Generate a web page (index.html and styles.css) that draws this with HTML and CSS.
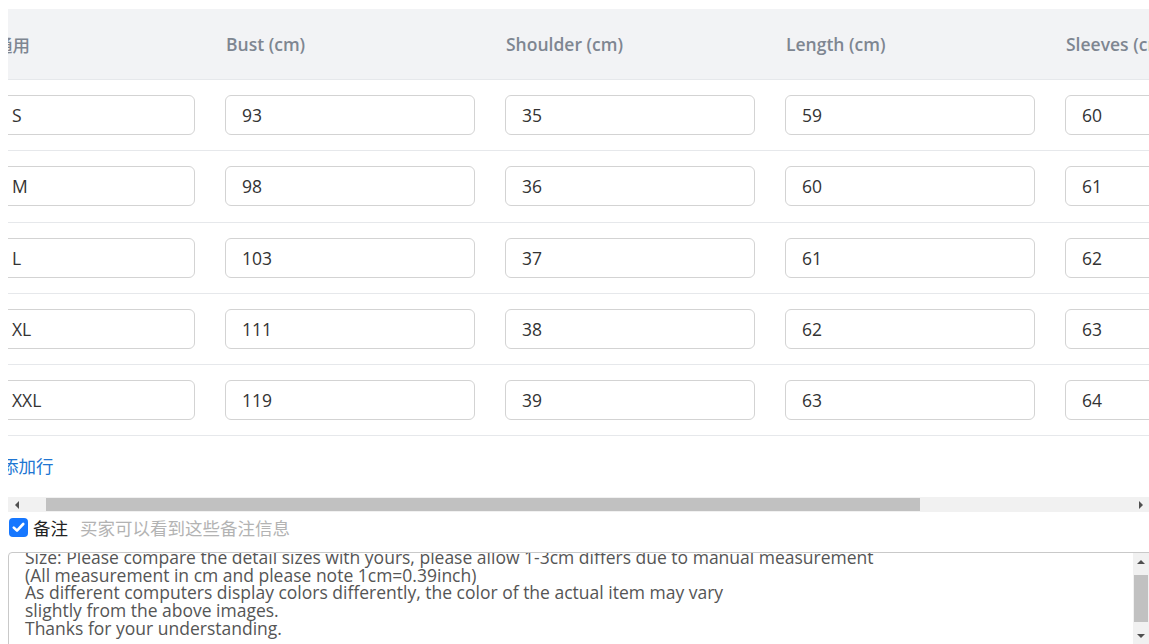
FILE: index.html
```html
<!DOCTYPE html>
<html lang="zh">
<head>
<meta charset="utf-8">
<title>尺码表</title>
<link rel="stylesheet" href="styles.css">
</head>
<body>
<div class="page">
  <div class="table-clip">
    <div class="table">
      <div class="row head">
        <div class="hcell first">通用</div>
        <div class="hcell">Bust (cm)</div>
        <div class="hcell">Shoulder (cm)</div>
        <div class="hcell">Length (cm)</div>
        <div class="hcell">Sleeves (cm)</div>
      </div>
      <div class="row">
        <div class="input">S</div><div class="input">93</div><div class="input">35</div><div class="input">59</div><div class="input">60</div>
      </div>
      <div class="row">
        <div class="input">M</div><div class="input">98</div><div class="input">36</div><div class="input">60</div><div class="input">61</div>
      </div>
      <div class="row">
        <div class="input">L</div><div class="input">103</div><div class="input">37</div><div class="input">61</div><div class="input">62</div>
      </div>
      <div class="row">
        <div class="input">XL</div><div class="input">111</div><div class="input">38</div><div class="input">62</div><div class="input">63</div>
      </div>
      <div class="row">
        <div class="input">XXL</div><div class="input">119</div><div class="input">39</div><div class="input">63</div><div class="input">64</div>
      </div>
      <div class="add-row"><span class="link">添加行</span></div>
    </div>
  </div>
  <div class="hscroll">
    <div class="arrow-btn"><span class="tri-left"></span></div>
    <div class="track"><div class="thumb"></div></div>
    <div class="arrow-btn right"><span class="tri-right"></span></div>
  </div>
  <div class="remark">
    <span class="checkbox"><svg width="13" height="11" viewBox="0 0 13 11"><path d="M1.8 5.6 L5 8.6 L11.2 2" fill="none" stroke="#fff" stroke-width="2.6" stroke-linecap="round" stroke-linejoin="round"/></svg></span>
    <span class="remark-label">备注</span>
    <span class="remark-hint">买家可以看到这些备注信息</span>
  </div>
  <div class="textarea">
    <div class="ta-text">Size: Please compare the detail sizes with yours, please allow 1-3cm differs due to manual measurement
(All measurement in cm and please note 1cm=0.39inch)
As different computers display colors differently, the color of the actual item may vary
slightly from the above images.
Thanks for your understanding.</div>
    <div class="vscroll">
      <div class="vbtn"><span class="tri-up"></span></div>
      <div class="vtrack"><div class="vthumb"></div></div>
      <div class="vbtn"><span class="tri-down"></span></div>
    </div>
  </div>
</div>
</body>
</html>
```
FILE: styles.css
```css
* { box-sizing: border-box; }
html, body { margin: 0; padding: 0; background: #fff; }
body {
  font-family: "Open Sans", "Noto Sans CJK SC", sans-serif;
  font-size: 17.5px;
  color: #333;
  overflow: hidden;
}
.page {
  padding-left: 8px;
  padding-top: 9px;
  width: 1149px;
  height: 644px;
  overflow: hidden;
}
.table-clip {
  overflow: hidden;
  width: 1141px;
}
.table {
  width: 1500px;
  margin-left: -13px;
}
.row {
  display: grid;
  grid-template-columns: 200px 250px 250px 250px 250px 250px;
  column-gap: 30px;
  align-items: center;
  height: 71.25px;
  border-bottom: 1px solid #e6e8eb;
}
.row.head {
  background: #f2f3f5;
  height: 71px;
}
.hcell {
  color: #7e8691;
  font-weight: 600;
  font-size: 17.5px;
  padding-left: 1px;
  white-space: nowrap;
}
.hcell.first { padding-left: 0; font-weight: 500; }
.input {
  height: 40px;
  border: 1px solid #d3d3d3;
  border-radius: 6px;
  display: flex;
  align-items: center;
  padding-left: 16px;
  color: #333;
  font-size: 17.5px;
}
.add-row {
  height: 61px;
  padding-left: 6px;
  padding-top: 20px;
  line-height: 20px;
}
.link {
  color: #2176d2;
  font-size: 17.5px;
}
.hscroll {
  display: flex;
  height: 15px;
  width: 1141px;
  background: #f1f1f1;
}
.arrow-btn {
  width: 17px;
  display: flex;
  align-items: center;
  justify-content: center;
}
.arrow-btn.right { width: 16px; }
.track {
  flex: 1;
  position: relative;
}
.thumb {
  position: absolute;
  left: 21px;
  width: 874px;
  top: 1px;
  bottom: 1px;
  background: #c1c1c1;
}
.tri-left, .tri-right, .tri-up, .tri-down { width: 0; height: 0; display: block; }
.tri-left { border-top: 4px solid transparent; border-bottom: 4px solid transparent; border-right: 4px solid #505050; }
.tri-right { border-top: 4px solid transparent; border-bottom: 4px solid transparent; border-left: 4px solid #505050; }
.tri-up { border-left: 4px solid transparent; border-right: 4px solid transparent; border-bottom: 4px solid #505050; }
.tri-down { border-left: 4px solid transparent; border-right: 4px solid transparent; border-top: 4px solid #505050; }
.remark {
  display: flex;
  align-items: center;
  height: 20px;
  margin-top: 5px;
}
.checkbox {
  width: 19px;
  height: 19px;
  margin-left: 1px;
  border-radius: 4px;
  background: #1677ff;
  display: flex;
  align-items: center;
  justify-content: center;
}
.remark-label {
  margin-left: 5px;
  color: #222;
  font-size: 17.5px;
}
.remark-hint {
  margin-left: 12px;
  color: #b3b3b3;
  font-size: 17.5px;
}
.textarea {
  margin-top: 15px;
  width: 1146px;
  height: 100px;
  border: 1px solid #c9c9c9;
  border-radius: 4px;
  position: relative;
  overflow: hidden;
}
.ta-text {
  white-space: pre;
  padding-left: 16px;
  margin-top: -4px;
  font-size: 17.5px;
  line-height: 17.6px;
  color: #555;
}
.vscroll {
  position: absolute;
  left: 1124px;
  top: 0;
  width: 16px;
  height: 92px;
  background: #f1f1f1;
  display: flex;
  flex-direction: column;
}
.vbtn {
  height: 18px;
  display: flex;
  align-items: center;
  justify-content: center;
}
.vtrack { flex: 1; position: relative; }
.vthumb {
  position: absolute;
  top: 4px;
  height: 47px;
  left: 1px;
  right: 1px;
  background: #c1c1c1;
}
```
